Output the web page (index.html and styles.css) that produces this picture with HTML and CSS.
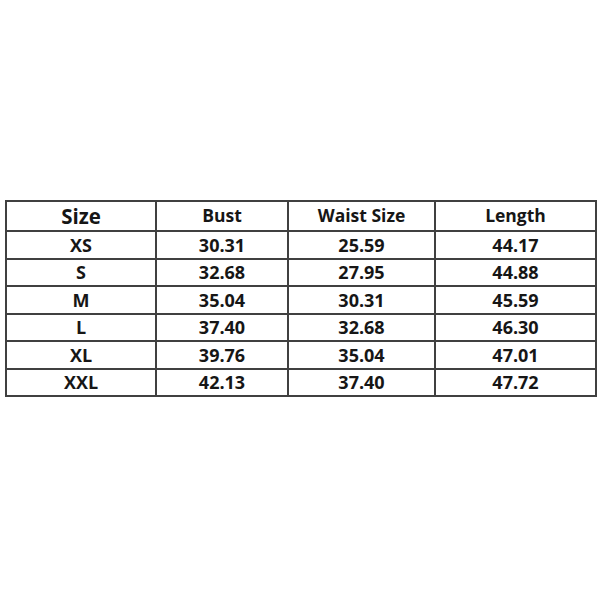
FILE: index.html
```html
<!DOCTYPE html>
<html>
<head>
<meta charset="utf-8">
<link rel="stylesheet" href="styles.css">
</head>
<body>
<table class="sizes">
  <colgroup>
    <col class="c1"><col class="c2"><col class="c3"><col class="c4">
  </colgroup>
  <thead>
    <tr><th class="big">Size</th><th>Bust</th><th>Waist Size</th><th>Length</th></tr>
  </thead>
  <tbody>
    <tr><td>XS</td><td>30.31</td><td>25.59</td><td>44.17</td></tr>
    <tr><td>S</td><td>32.68</td><td>27.95</td><td>44.88</td></tr>
    <tr><td>M</td><td>35.04</td><td>30.31</td><td>45.59</td></tr>
    <tr><td>L</td><td>37.40</td><td>32.68</td><td>46.30</td></tr>
    <tr><td>XL</td><td>39.76</td><td>35.04</td><td>47.01</td></tr>
    <tr><td>XXL</td><td>42.13</td><td>37.40</td><td>47.72</td></tr>
  </tbody>
</table>
</body>
</html>
```
FILE: styles.css
```css
html, body {
  margin: 0;
  padding: 0;
  background: #ffffff;
}
body {
  font-family: "Open Sans", "Liberation Sans", sans-serif;
  color: #161616;
}
.sizes {
  border-collapse: collapse;
  margin: 200px 0 0 5px;
  width: 590px;
  table-layout: fixed;
  border: 2px solid #2e2e2e;
}
.c1 { width: 150px; }
.c2 { width: 132px; }
.c3 { width: 147px; }
.c4 { width: 161px; }
.sizes th, .sizes td {
  border: 2px solid #404040;
  text-align: center;
  vertical-align: middle;
  padding: 0;
  font-weight: 700;
  line-height: 1;
}
.sizes th {
  height: 28px;
  font-size: 17.5px;
}
.sizes th.big {
  font-size: 20.5px;
}
.sizes td {
  height: 25.5px;
  font-size: 18px;
}
```
